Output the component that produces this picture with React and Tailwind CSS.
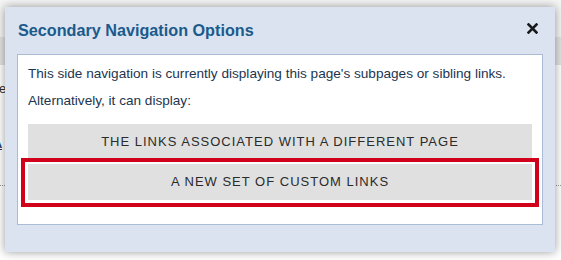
import React from "react";

export default function App() {
  return (
    <div
      className="relative w-[561px] h-[260px] overflow-hidden bg-white"
      style={{ fontFamily: '"Liberation Sans", Arial, sans-serif' }}
    >
      {/* Page behind the modal */}
      <div className="h-[37px] bg-[#f5f5f5]" />
      <div className="h-[28px] bg-[#e3e3e3]" />
      <div className="pt-[14px] text-[13px] text-[#333]">
        <p className="-ml-[14px]">Are yo</p>
        <p className="mt-[30px] -ml-[10px] text-[18px] text-[#1f3f6a] underline">A</p>
        <div className="mt-[29px] border-t border-dotted border-[#999]" />
      </div>

      {/* Modal */}
      <div className="absolute left-[5px] top-[7px] w-[550px] bg-[#dae3ef] shadow-[0_0_9px_rgba(0,0,0,0.4)] pb-[27px]">
        <div className="h-[47px] flex items-center justify-between pl-[13px] pr-[17px]">
          <h2 className="text-[16.2px] font-bold text-[#1b5a8c]">
            Secondary Navigation Options
          </h2>
          <button className="-mt-[5px]">
            <svg width="11" height="11" viewBox="0 0 11 11">
              <path d="M1.5 1.5 L9.5 9.5 M9.5 1.5 L1.5 9.5" stroke="#1a1a1a" strokeWidth="2.6" strokeLinecap="square" />
            </svg>
          </button>
        </div>

        <div className="mx-[12px] border border-[#a9bcd3] bg-white px-[10px] pt-[10px] pb-[24px]">
          <p className="text-[13.6px] leading-[18px] text-[#1c3550]">
            This side navigation is currently displaying this page's subpages or sibling links.
          </p>
          <p className="mt-[9px] text-[13.6px] leading-[18px] text-[#1c3550]">
            Alternatively, it can display:
          </p>
          <div className="mt-[14px] flex flex-col gap-[4px]">
            <button className="h-[36px] w-full bg-[#e0e0e0] text-[13px] tracking-[1px] text-[#2b2b2b]">
              THE LINKS ASSOCIATED WITH A DIFFERENT PAGE
            </button>
            <div className="relative">
              <button className="h-[36px] w-full bg-[#e0e0e0] text-[13px] tracking-[1px] text-[#2b2b2b]">
                A NEW SET OF CUSTOM LINKS
              </button>
              <div className="absolute -left-[7px] -right-[7px] -top-[6px] -bottom-[7px] border-[4px] border-[#d0021b] pointer-events-none" />
            </div>
          </div>
        </div>
      </div>
    </div>
  );
}
